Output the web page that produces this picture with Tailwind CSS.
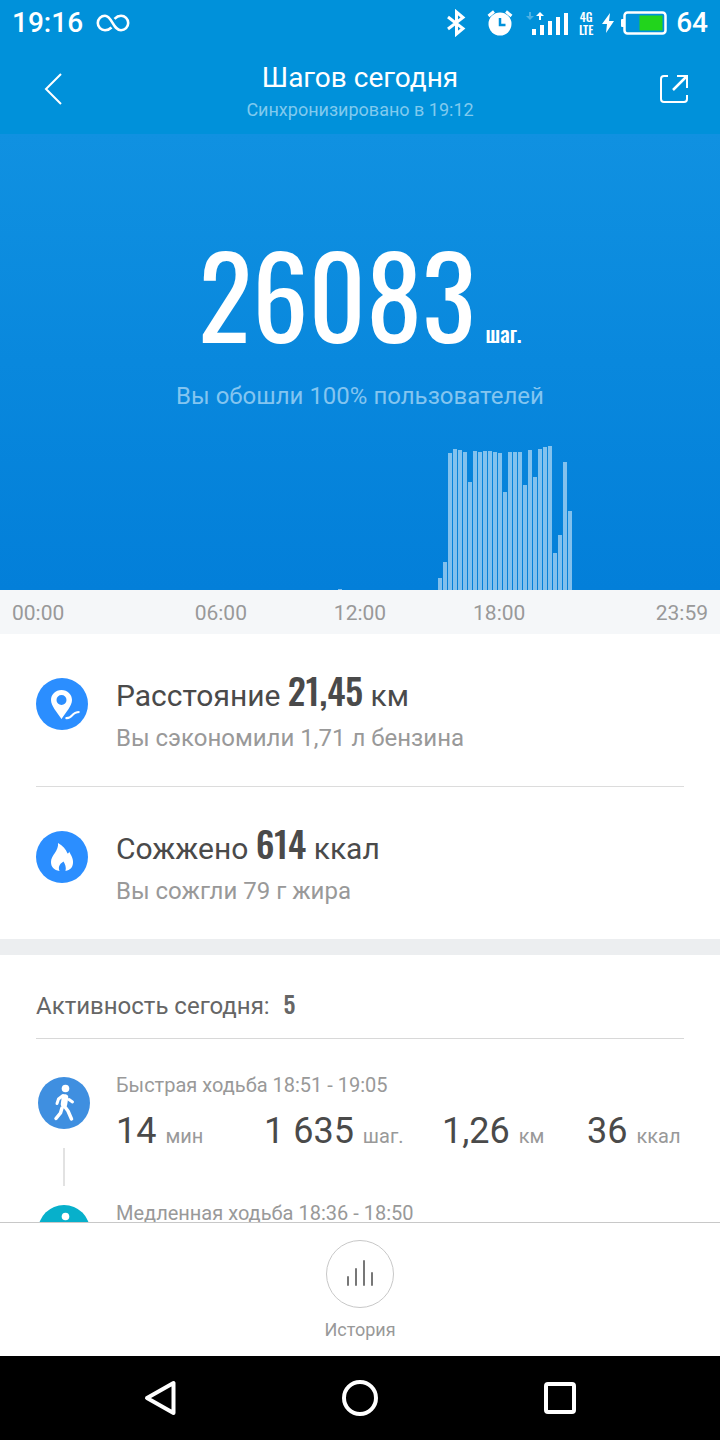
<!DOCTYPE html>
<html lang="ru">
  <head>
    <meta charset="UTF-8" />
    <meta name="viewport" content="width=device-width, initial-scale=1.0" />
    <title>Шагов сегодня</title>
    <script src="https://cdn.jsdelivr.net/npm/@tailwindcss/browser@4"></script>
  </head>
  <body
    class="h-screen flex flex-col overflow-hidden bg-white font-['Roboto',sans-serif] text-[#4a4a4a]"
  >
    <!-- Status bar -->
    <div
      class="h-11 shrink-0 flex items-center justify-between px-3 pt-[2px] bg-[#0091da] text-white text-[28px] leading-8 font-medium"
    >
      <div class="flex items-center gap-3">
        <span>19:16</span>
        <svg class="w-9 h-6" viewBox="0 0 36 24" fill="none" stroke="currentColor" stroke-width="2.600">
          <path d="M16.500 16.500C14.500 18.500 12 19.200 10 19.200A7.200 7.200 0 1 1 10 4.800C17 4.800 18 19.200 26 19.200A7.200 7.200 0 1 0 26 4.800C23.500 4.800 21.500 5.800 19.500 7.800" />
        </svg>
      </div>
      <div class="flex items-center">
        <svg class="w-5 h-7 mr-5" viewBox="0 0 20 28" fill="none" stroke="currentColor" stroke-width="3">
          <path d="M2 8L17 19.500L10.500 25V3L17 8.500L2 20" />
        </svg>
        <svg class="w-7 h-7 mr-3" viewBox="0 0 28 28" fill="none">
          <circle cx="14" cy="15" r="11.500" fill="currentColor" />
          <path d="M2.500 7L8 2.500M25.500 7L20 2.500" stroke="currentColor" stroke-width="3" />
          <path d="M14 9V16H19.500" stroke="#0091da" stroke-width="2.500" />
        </svg>
        <svg class="w-11 h-7 mr-2" viewBox="0 0 44 28" fill="currentColor">
          <path d="M3 3H5V7H8L4 11L0 7H3Z" opacity=".3" />
          <path d="M13 11V7H10L14 3L18 7H15V11Z" />
          <path d="M6 20H10V26H6ZM14 16H18V26H14ZM22 12H26V26H22ZM30 8H34V26H30ZM38 4H42V26H38Z" />
        </svg>
        <span class="w-4 mr-2 flex flex-col items-center text-xs leading-[13px] font-['Oswald','Roboto',sans-serif]">
          <span>4G</span>
          <span>LTE</span>
        </span>
        <svg class="w-3 h-5 mr-[6px]" viewBox="0 0 12 20" fill="currentColor">
          <path d="M8 0L0 11H5L4 20L12 8H7Z" />
        </svg>
        <svg class="w-12 h-6 mr-2" viewBox="0 0 48 24" fill="none">
          <rect x="1" y="8" width="4" height="8" rx="1" fill="currentColor" />
          <rect x="4.500" y="1.500" width="41" height="21" rx="3" stroke="currentColor" stroke-width="2.500" />
          <rect x="19.500" y="4.500" width="23" height="15" fill="#22d41c" />
        </svg>
        <span>64</span>
      </div>
    </div>

    <!-- Header -->
    <header
      class="h-[90px] shrink-0 grid grid-cols-[1fr_auto_1fr] items-center px-[22px] bg-[#0091da] text-white"
    >
      <button type="button" aria-label="Назад" class="justify-self-start w-12 h-12 flex items-center px-[22px]">
        <svg class="w-5 h-8 shrink-0" viewBox="0 0 20 32" fill="none" stroke="currentColor" stroke-width="2">
          <path d="M17 1L2 16L17 31" />
        </svg>
      </button>
      <div class="pt-[10px] text-center">
        <h1 class="text-[28px] leading-8">Шагов сегодня</h1>
        <p class="text-[18px] leading-8 text-[#80caee]">Синхронизировано в 19:12</p>
      </div>
      <button type="button" aria-label="Поделиться" class="justify-self-end w-12 h-12 flex items-center justify-center">
        <svg class="w-7 h-7" viewBox="0 0 28 28" fill="none" stroke="currentColor" stroke-width="2">
          <path d="M8 1H4Q1 1 1 4V24Q1 27 4 27H24Q27 27 27 24V20M17 1H27V13" />
          <path d="M26 2L13 15" stroke-width="2.500" />
        </svg>
      </button>
    </header>

    <!-- Steps -->
    <section
      class="h-[456px] shrink-0 flex flex-col items-center bg-linear-to-b from-[#1091e1] to-[#037fd9] text-white"
    >
      <div class="mt-[93px] flex items-baseline gap-[10px] font-['Oswald','Roboto',sans-serif]">
        <span class="text-[112px] leading-[130px]">26083</span>
        <span class="text-[22px] leading-8 font-medium">шаг.</span>
      </div>
      <p class="mt-[23px] text-2xl text-[#84c5f0]">Вы обошли 100% пользователей</p>
      <div id="chart" class="mt-auto w-full h-36 flex items-end gap-px px-[3px]"></div>
    </section>
    <div
      class="h-11 shrink-0 grid grid-cols-5 items-center px-3 pt-1 bg-[#f5f7f9] text-[21px] text-center text-[#999]"
    >
      <span class="text-left">00:00</span>
      <span>06:00</span>
      <span>12:00</span>
      <span>18:00</span>
      <span class="text-right">23:59</span>
    </div>

    <main class="flex-1 min-h-0 overflow-hidden">
      <!-- Totals -->
      <section class="px-9">
        <div class="h-[153px] flex gap-7 pt-8 border-b border-[#dcdcdc]">
          <svg class="w-[52px] h-[52px] mt-3 shrink-0" viewBox="0 0 52 52">
            <circle cx="26" cy="26" r="26" fill="#2b8eff" />
            <path fill="#fff" fill-rule="evenodd" d="M25.500 12C31.500 12 36 16.500 36 22C36 28 30 34 25.500 41C21 34 15 28 15 22C15 16.500 19.500 12 25.500 12ZM25.500 17A5 5 0 1 0 25.500 27A5 5 0 1 0 25.500 17Z" />
            <path d="M29.500 40C38 41 34 34 43.500 34" fill="none" stroke="#fff" stroke-width="2.200" />
          </svg>
          <div>
            <h2 class="text-[30px] leading-[48px]">
              Расстояние
              <span class="text-[36px] font-medium font-['Oswald','Roboto',sans-serif]">21,45</span>
              км
            </h2>
            <p class="text-2xl leading-9 text-[#999]">Вы сэкономили 1,71 л бензина</p>
          </div>
        </div>
        <div class="h-[152px] flex gap-7 pt-8">
          <svg class="w-[52px] h-[52px] mt-3 shrink-0" viewBox="0 0 52 52">
            <circle cx="26" cy="26" r="26" fill="#2b8eff" />
            <path fill="#fff" d="M22 12C27 15 30 18 31.500 22.500C32.500 22.500 33 21.500 33 20.500C35 24 37.500 28 37 32C36.500 37 34 39 29.500 40C30.500 36 29 33 27.500 30.500C25 32 21.500 35 23.500 40C18 39 15 36 15 31C15 24 23 20 22 12Z" />
          </svg>
          <div>
            <h2 class="text-[30px] leading-[48px]">
              Сожжено
              <span class="text-[36px] font-medium font-['Oswald','Roboto',sans-serif]">614</span>
              ккал
            </h2>
            <p class="text-2xl leading-9 text-[#999]">Вы сожгли 79 г жира</p>
          </div>
        </div>
      </section>
      <div class="h-4 bg-[#eceef0]"></div>

      <!-- Activities -->
      <section class="px-9">
        <h3 class="h-[84px] pt-[26px] border-b border-[#d8d8d8] text-2xl leading-[44px] text-[#666]">
          Активность сегодня:
          <span class="ml-2 font-medium font-['Oswald','Roboto',sans-serif]">5</span>
        </h3>
        <div class="h-32 mt-8 flex gap-[26px] pl-[2px]">
          <div class="flex flex-col items-center shrink-0 pt-[6px]">
            <svg class="w-[52px] h-[52px]" viewBox="0 0 52 52" fill="none" stroke="#fff" stroke-linecap="round" stroke-linejoin="round">
              <circle cx="26" cy="26" r="26" fill="#3f8fe0" stroke="none" />
              <circle cx="27.500" cy="11.500" r="3.800" fill="#fff" stroke="none" />
              <path d="M27 20.500L26 27" stroke-width="6.500" />
              <path d="M25 18.500L20.500 22L19 26.500M31 22.500L34.500 25" stroke-width="3" />
              <path d="M25.500 28L30 34L33.500 42M24 31L22.500 36L18 41.500" stroke-width="3.500" />
            </svg>
            <div class="w-[2px] h-[38px] mt-[19px] bg-[#e2e2e2]"></div>
          </div>
          <div class="flex-1">
            <p class="text-xl leading-7 text-[#999]">Быстрая ходьба 18:51 - 19:05</p>
            <div class="mt-2 grid grid-cols-[148fr_178fr_145fr_97fr] text-xl leading-[48px] text-[#999] whitespace-nowrap">
              <span><span class="mr-[9px] text-[36px] text-[#4a4a4a]">14</span>мин</span>
              <span><span class="mr-[9px] text-[36px] text-[#4a4a4a]">1 635</span>шаг.</span>
              <span><span class="mr-[9px] text-[36px] text-[#4a4a4a]">1,26</span>км</span>
              <span><span class="mr-[9px] text-[36px] text-[#4a4a4a]">36</span>ккал</span>
            </div>
          </div>
        </div>
        <div class="h-32 flex gap-[26px] pl-[2px]">
          <div class="shrink-0 pt-[6px]">
            <svg class="w-[52px] h-[52px]" viewBox="0 0 52 52" fill="none" stroke="#fff" stroke-linecap="round" stroke-linejoin="round">
              <circle cx="26" cy="26" r="26" fill="#07b0cb" stroke="none" />
              <circle cx="27.500" cy="11.500" r="3.800" fill="#fff" stroke="none" />
              <path d="M26.500 22L26 27" stroke-width="6.500" />
              <path d="M25.500 28L30 34L33.500 42M24 31L22.500 36L18 41.500" stroke-width="3.500" />
            </svg>
          </div>
          <p class="text-xl leading-7 text-[#999]">Медленная ходьба 18:36 - 18:50</p>
        </div>
      </section>
    </main>

    <!-- History -->
    <footer class="h-[134px] shrink-0 flex justify-center border-t border-[#c8c8c8] bg-white">
      <button type="button" class="flex flex-col items-center pt-[17px] text-lg text-[#999]">
        <span class="w-[68px] h-[68px] flex items-center justify-center rounded-full border border-[#c8c8c8]">
          <svg class="w-7 h-7" viewBox="0 0 28 28" fill="none" stroke="#777" stroke-width="2" stroke-linecap="round">
            <path d="M2 17V25M10 9V25M18 1V25M26 13V25" />
          </svg>
        </span>
        <span class="mt-2">История</span>
      </button>
    </footer>

    <!-- Navigation bar -->
    <nav class="h-[84px] shrink-0 flex items-center justify-center gap-[164px] bg-black text-white">
      <button type="button" aria-label="Назад">
        <svg class="w-9 h-9" viewBox="0 0 36 36" fill="none" stroke="currentColor" stroke-width="4" stroke-linejoin="round">
          <path d="M31.500 3V33L5 18Z" />
        </svg>
      </button>
      <button type="button" aria-label="Домой">
        <svg class="w-9 h-9" viewBox="0 0 36 36" fill="none" stroke="currentColor" stroke-width="4">
          <circle cx="18" cy="18" r="16" />
        </svg>
      </button>
      <button type="button" aria-label="Недавние">
        <svg class="w-9 h-9" viewBox="0 0 36 36" fill="none" stroke="currentColor" stroke-width="4">
          <rect x="4" y="4" width="28" height="28" rx="2" />
        </svg>
      </button>
    </nav>

    <script>
      // one bar per ten minutes, starting at 00:00
      const steps = new Array(143).fill(0);
      steps[67] = 1;
      const walk = [
        12, 28, 137, 141, 140, 138, 108, 139, 138, 139, 139, 138, 137, 98,
        138, 138, 138, 105, 140, 113, 141, 143, 144, 37, 55, 128, 79,
      ];
      walk.forEach((value, i) => (steps[87 + i] = value));

      document.getElementById("chart").innerHTML = steps
        .map((v) => `<div class="flex-1 bg-white/50" style="height: ${v}px"></div>`)
        .join("");
    </script>
  </body>
</html>
